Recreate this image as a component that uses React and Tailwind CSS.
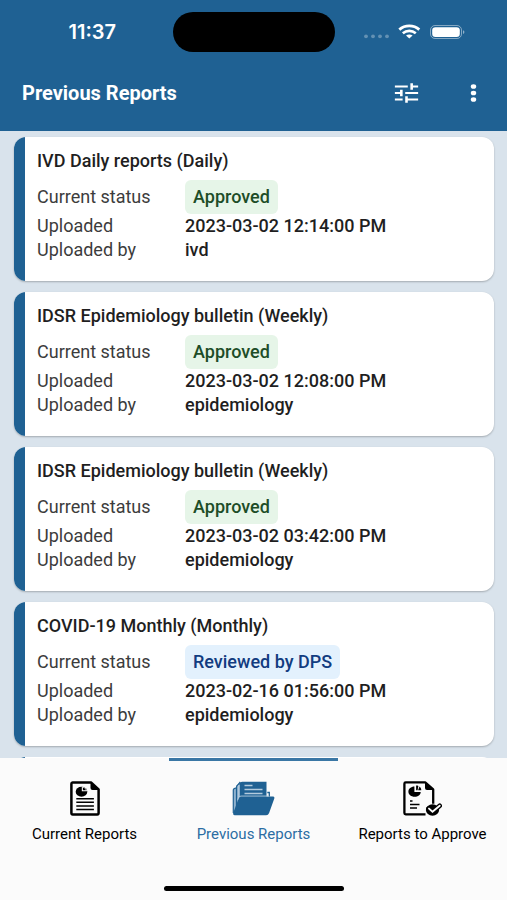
const reports = [
  { title: 'IVD Daily reports (Daily)', status: 'Approved', uploaded: '2023-03-02 12:14:00 PM', by: 'ivd' },
  { title: 'IDSR Epidemiology bulletin (Weekly)', status: 'Approved', uploaded: '2023-03-02 12:08:00 PM', by: 'epidemiology' },
  { title: 'IDSR Epidemiology bulletin (Weekly)', status: 'Approved', uploaded: '2023-03-02 03:42:00 PM', by: 'epidemiology' },
  { title: 'COVID-19 Monthly (Monthly)', status: 'Reviewed by DPS', uploaded: '2023-02-16 01:56:00 PM', by: 'epidemiology' },
];

const badgeStyles = {
  Approved: 'bg-[#e6f5e8] text-[#1d4d27]',
  'Reviewed by DPS': 'bg-[#e3f1fd] text-[#123c80]',
};

function StatusIcons() {
  return (
    <svg width="102" height="16" viewBox="0 0 102 16" fill="none" aria-hidden="true">
      <g fill="#fff" opacity="0.3">
        <circle cx="3" cy="12.3" r="1.9" />
        <circle cx="10" cy="12.3" r="1.9" />
        <circle cx="17" cy="12.3" r="1.9" />
        <circle cx="24" cy="12.3" r="1.9" />
      </g>
      <path d="M36.3 5.600c5.600-5 14.400-5 20 0" stroke="#fff" strokeWidth="2.800" />
      <path d="M39.800 9.200c3.800-3.100 9.200-3.100 13 0" stroke="#fff" strokeWidth="2.600" />
      <path d="M43 11.600c2-1.500 4.600-1.500 6.600 0l-3.300 2.900z" fill="#fff" />
      <rect x="67.500" y="1.500" width="31" height="13" rx="4.500" stroke="#fff" opacity="0.450" />
      <rect x="69.200" y="3.200" width="27.600" height="9.800" rx="3.200" fill="#fff" />
      <path d="M100 6.200c1.900.5 1.900 3.200 0 3.700z" fill="#fff" opacity="0.500" />
    </svg>
  );
}

function TuneIcon() {
  return (
    <svg width="31" height="26" viewBox="0 0 24 24" preserveAspectRatio="none" fill="currentColor" aria-hidden="true">
      <path d="M3 17v2h6v-2H3zM3 5v2h10V5H3zm10 16v-2h8v-2h-8v-2h-2v6h2zM7 9v2H3v2h4v2h2V9H7zm14 4v-2H11v2h10zm-6-4h2V7h4V5h-4V3h-2v6z" />
    </svg>
  );
}

function MoreIcon() {
  return (
    <svg width="31" height="26" viewBox="0 0 24 24" preserveAspectRatio="none" fill="currentColor" aria-hidden="true">
      <circle cx="12" cy="6" r="2.100" />
      <circle cx="12" cy="12" r="2.100" />
      <circle cx="12" cy="18" r="2.100" />
    </svg>
  );
}

function DocumentIcon() {
  return (
    <svg width="30" height="35" viewBox="0 0 30 35" fill="none" aria-hidden="true">
      <path d="M2.500 1.400h18.500l7.600 7v23.700q0 1.300-1.300 1.300H2.700q-1.300 0-1.300-1.300V2.700q0-1.300 1.100-1.300z" stroke="currentColor" strokeWidth="2.500" strokeLinejoin="round" />
      <path d="M20.500 1l8.500 8h-6.500q-2 0-2-2z" fill="currentColor" />
      <ellipse cx="11.500" cy="10.700" rx="5.800" ry="5" fill="currentColor" />
      <path d="M11.800 10.300V5.900c3 .1 4.900 1.700 5.300 4.400z" fill="#fbfbfb" />
      <path d="M12.900 9.200V6.700c1.600.2 2.700 1.100 3 2.500z" fill="currentColor" />
      <path d="M6.300 17.700h17.600M6.300 21.300h17.600M6.300 24.900h17.600M6.300 28.500h17.600" stroke="currentColor" strokeWidth="1.500" />
    </svg>
  );
}

function FolderIcon() {
  return (
    <svg width="43" height="35" viewBox="0 0 43 35" fill="none" aria-hidden="true">
      <path d="M1.500 31V8.500l3-1.700V4.300L8 1.300V16L3 31z" fill="#8fb2ce" />
      <path d="M1.300 32V9q0-1 1-1.400l2-.8M4.500 27V6q0-1 1-1.700L8.300 1" stroke="#1f6193" strokeWidth="1.200" />
      <path d="M7.500 3.500q0-2.800 2.800-2.800h24.200v15h-27z" fill="#1f6193" />
      <path d="M7 20V4" stroke="#d7e4ee" strokeWidth="0.900" />
      <path d="M35.300 11.500h2v4" stroke="#1f6193" strokeWidth="1.300" />
      <path d="M12.500 4.500h8M12.500 8.500h18M12.500 12.500h18" stroke="#b3cbdd" strokeWidth="1.700" />
      <path d="M6.600 17.500q.6-1.900 2.600-1.900h31.600q2.100 0 1.500 1.900l-5.200 14.600q-.8 2.200-3 2.200H3q-2.200 0-1.800-2.300z" fill="#1f6193" />
      <path d="M5.600 19L6.400 17q.7-2 2.700-2h28" stroke="#b3cbdd" strokeWidth="0.800" />
    </svg>
  );
}

function ApproveIcon() {
  return (
    <svg width="39" height="35" viewBox="0 0 39 35" fill="none" aria-hidden="true">
      <path d="M22.500 33.400H2.700q-1.300 0-1.300-1.300V2.700q0-1.300 1.300-1.300h19.500l8 7v14.400" stroke="currentColor" strokeWidth="2.300" strokeLinejoin="round" />
      <path d="M22 1l9 8h-7q-2 0-2-2z" fill="currentColor" />
      <path d="M11.400 5.600v5.300h6.300c0 2.900-2.700 4.800-6.100 4.800-3.500 0-6.200-2.200-6.200-5s2.600-5.100 6-5.100z" fill="currentColor" />
      <path d="M13.100 9.300V4.500c1 0 1.600.1 2.300.4l-.8 4.400z" fill="currentColor" />
      <path d="M16.500 5.500c1 .7 1.700 2 1.800 3.800h-3.200z" fill="currentColor" />
      <path d="M7 20h2.500M7 23.500h9.500M7 27h7" stroke="currentColor" strokeWidth="1.700" />
      <ellipse cx="29.500" cy="29" rx="6.600" ry="5.800" fill="currentColor" />
      <path d="M25.500 27.600l4 3.600 7.200-6.400" stroke="currentColor" strokeWidth="4.600" strokeLinejoin="round" strokeLinecap="round" />
      <path d="M26 27.600l3.500 3.100 7.200-6" stroke="#fbfbfb" strokeWidth="1.900" strokeLinecap="round" />
    </svg>
  );
}

const tabs = [
  { label: 'Current Reports', Icon: DocumentIcon },
  { label: 'Previous Reports', Icon: FolderIcon, active: true },
  { label: 'Reports to Approve', Icon: ApproveIcon },
];

function ReportCard({ title, status, uploaded, by }) {
  return (
    <article className="flex overflow-hidden rounded-xl bg-white shadow-[0_1px_2px_rgba(0,0,0,0.25)]">
      <div className="w-[11px] shrink-0 bg-[#1f6193]" />
      <div className="flex-1 pt-3 pr-4 pb-[19px] pl-3">
        <h2 className="text-[18px] leading-6 font-medium">{title}</h2>
        <dl className="mt-[7px] grid grid-cols-[148px_1fr] items-center text-[18px] leading-6">
          <dt className="text-[#3c3c3c]">Current status</dt>
          <dd className="flex">
            <span className={`rounded-md px-2 py-[5px] font-medium ${badgeStyles[status]}`}>{status}</span>
          </dd>
          <dt className="text-[#3c3c3c]">Uploaded</dt>
          <dd className="font-medium">{uploaded}</dd>
          <dt className="text-[#3c3c3c]">Uploaded by</dt>
          <dd className="font-medium">{by}</dd>
        </dl>
      </div>
    </article>
  );
}

export default function App() {
  return (
    <div className="flex h-screen flex-col bg-[#d9e3ec] font-['Roboto',sans-serif] text-[#1f1f1f]">
      <header className="shrink-0 bg-[#1f6193] text-white">
        <div className="grid h-16 grid-cols-[1fr_162px_1fr] items-center">
          <span className="pl-3 text-center font-['Inter',sans-serif] text-[20px] font-semibold">11:37</span>
          <div className="h-10 rounded-full bg-black" />
          <div className="flex justify-end pr-[42px]">
            <StatusIcons />
          </div>
        </div>
        <div className="flex h-[67px] items-center pr-[18px] pb-[10px] pl-[22px]">
          <h1 className="flex-1 text-[20px] font-bold">Previous Reports</h1>
          <div className="flex gap-9">
            <button aria-label="Filter"><TuneIcon /></button>
            <button aria-label="More options"><MoreIcon /></button>
          </div>
        </div>
      </header>

      <main className="flex min-h-0 flex-1 flex-col overflow-hidden pt-[6px] pr-[13px] pl-[14px]">
        <div className="flex flex-col gap-[11px]">
          {reports.map((report, i) => (
            <ReportCard key={i} {...report} />
          ))}
          {/* top edge of the next card */}
          <div className="flex h-6 overflow-hidden rounded-xl bg-white">
            <div className="w-[11px] bg-[#1f6193]" />
          </div>
        </div>
      </main>

      <nav className="shrink-0 bg-[#fbfbfb]">
        <div className="grid grid-cols-3">
          {tabs.map(({ label, Icon, active }) => (
            <button
              key={label}
              className={`flex flex-col items-center gap-2 border-t-[3px] pt-5 text-[15px] leading-5 ${active ? 'border-[#3a77a5] text-[#2b6da3]' : 'border-transparent text-black'}`}
            >
              <Icon />
              <span>{label}</span>
            </button>
          ))}
        </div>
        <div className="flex justify-center pt-[42px] pb-[9px]">
          <div className="h-[5px] w-[180px] rounded-full bg-black" />
        </div>
      </nav>
    </div>
  );
}
